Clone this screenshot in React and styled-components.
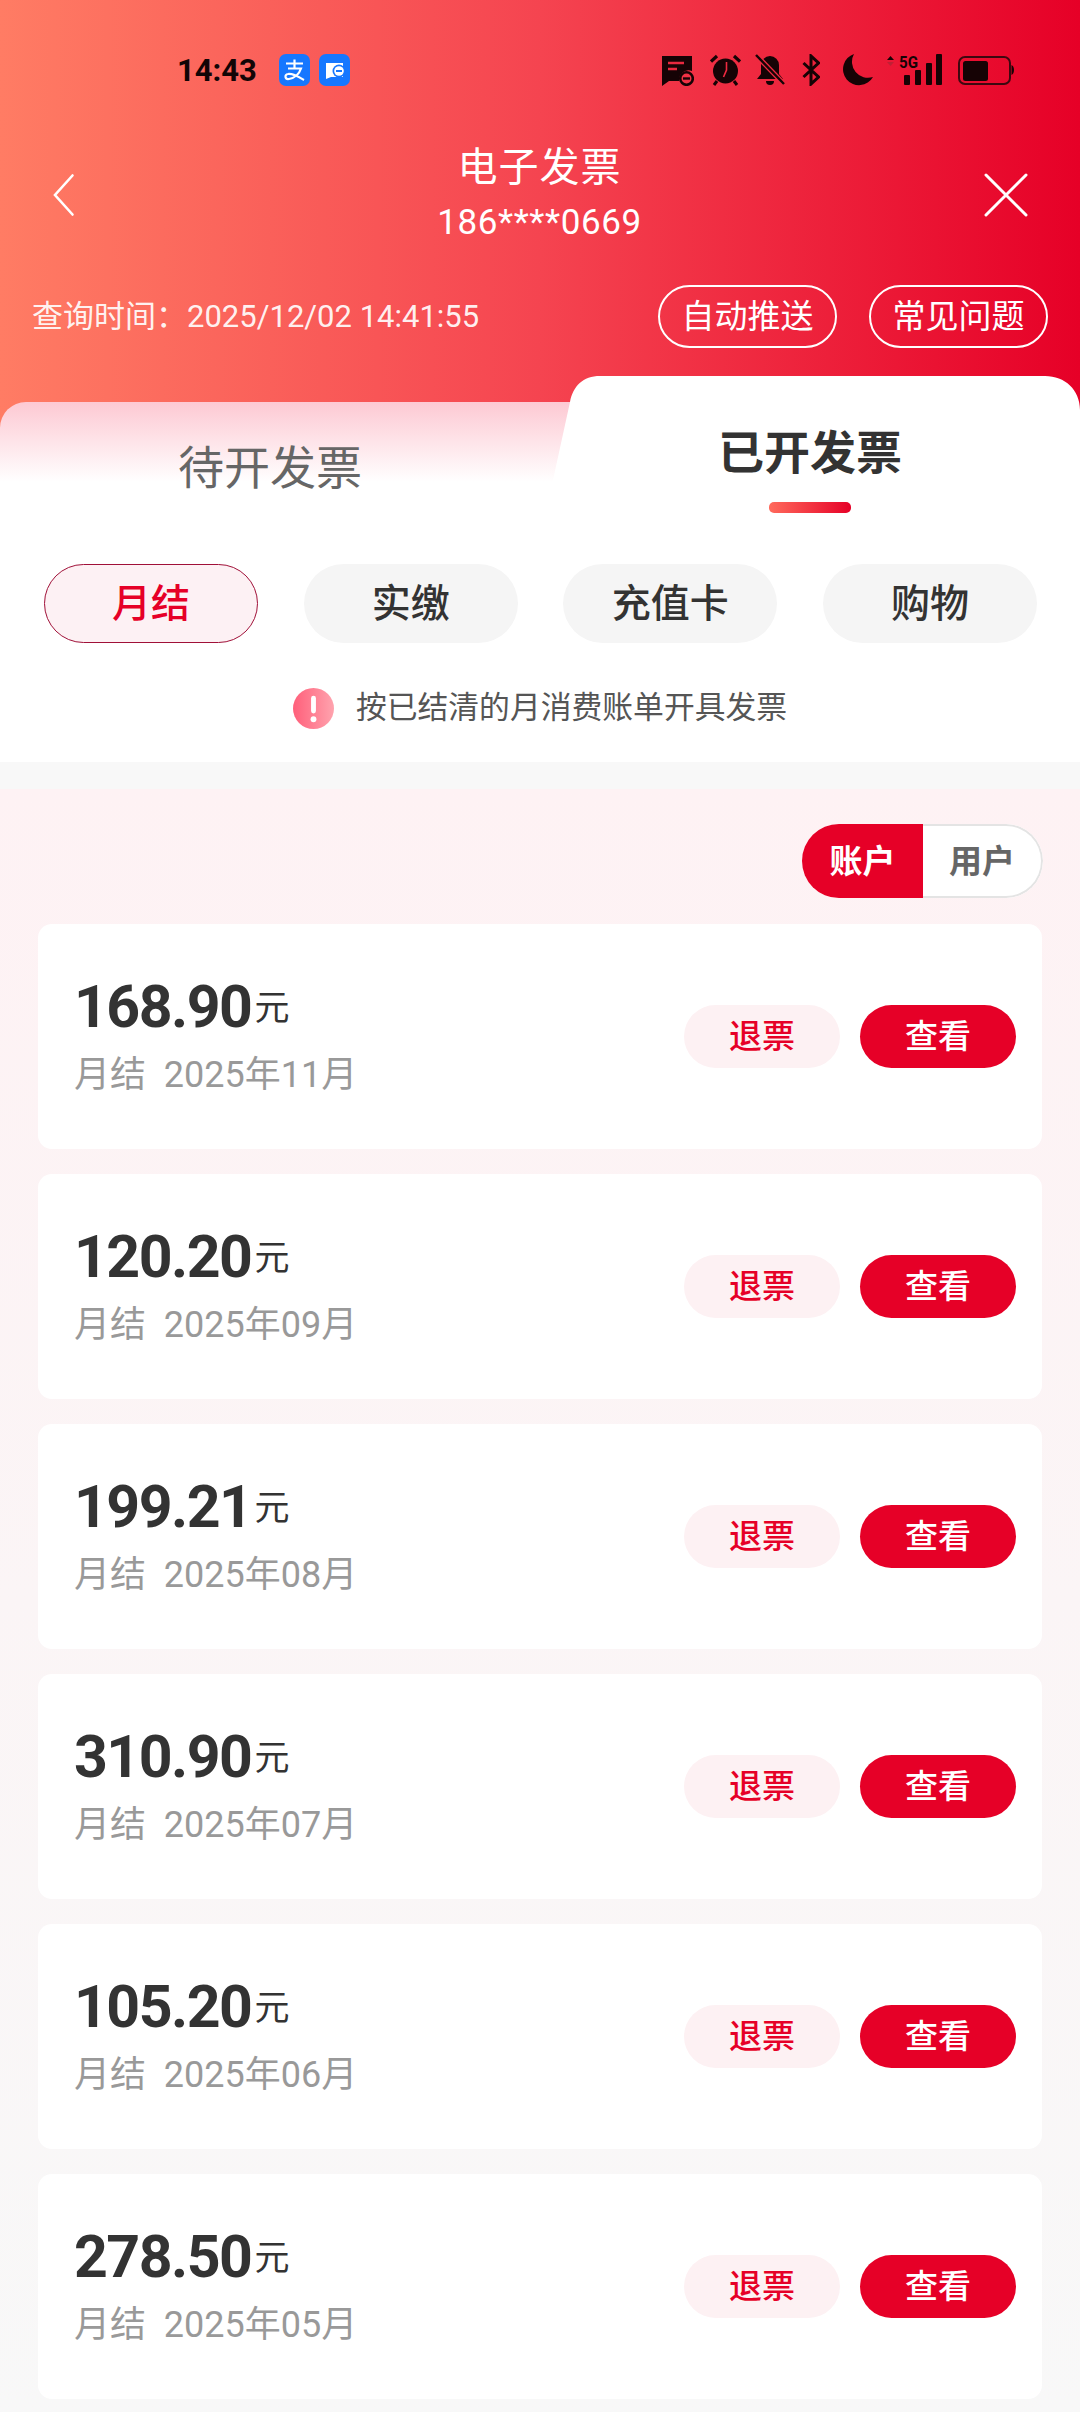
import React from "react";
import styled, { createGlobalStyle } from "styled-components";

const Global = createGlobalStyle`
  html, body { margin: 0; padding: 0; background: #fff; }
  body { font-family: "Roboto", "Noto Sans CJK SC", sans-serif; }
`;
const CJK = `"Roboto", "Noto Sans CJK SC", sans-serif`;

const Page = styled.div`
  width: 1080px; height: 2412px; overflow: hidden; background: #fff; display: flex; flex-direction: column;
`;
const Hero = styled.header`
  height: 436px; flex: none; background: linear-gradient(90deg, #ff7c64 0%, #f54450 50%, #e60027 100%);
  display: flex; flex-direction: column; position: relative;
`;
const StatusBar = styled.div`
  height: 50px; margin-top: 45px; padding: 0 0 0 177px; display: flex; align-items: center; box-sizing: border-box;
`;
const Clock = styled.span`
  font: 700 31px "Roboto", sans-serif; color: #120506; width: 93px;
`;
const AppIcon = styled.svg`
  width: 31px; height: 32px; margin-left: 9px; flex: none;
`;
const SysIcons = styled.div`
  margin-left: auto; margin-right: 66px; display: flex; align-items: center;
`;
const SysIcon = styled.svg`
  display: block; height: 32px; width: ${p => p.$w}px; margin-left: ${p => p.$gap}px; flex: none;
`;
const TitleBar = styled.div`
  display: flex; align-items: flex-start; justify-content: space-between; height: 105px; padding: 0 51px 0 50px; margin-top: 45px;
`;
const NavIcon = styled.svg`
  width: 46px; height: 46px; margin-top: 32px; flex: none;
`;
const TitleBlock = styled.div`
  display: flex; flex-direction: column; align-items: center; color: #fff; padding-top: 7px;
`;
const Title = styled.div`
  font: 400 40px/42px ${CJK};
  letter-spacing: 1px;
`;
const Phone = styled.div`
  font: 400 35px/42px ${CJK}; margin-top: 13px; letter-spacing: 0.6px;
`;
const QueryRow = styled.div`
  display: flex; align-items: center; padding: 0 32px; margin-top: 40px;
`;
const QueryText = styled.span`
  font: 400 31px/40px ${CJK}; color: rgba(255,255,255,.92); margin-right: auto;
`;
const OutlineBtn = styled.span`
  width: 179px; height: 63px; box-sizing: border-box; border: 2px solid #fff; border-radius: 32px; color: #fff;
  display: flex; align-items: center; justify-content: center; margin-left: 32px; padding-bottom: 5px;
  font: 400 33px ${CJK};
`;
const Tabs = styled.div`
  position: relative; height: 126px; margin-top: -60px; flex: none; display: flex; background: transparent;
`;
const TabBack = styled.div`
  position: absolute; left: 0; top: 26px; width: 620px; height: 100px; border-radius: 26px 0 0 0;
  background: linear-gradient(180deg, #fdc9d3 0%, #fff 80%);
  padding-top: 38px; box-sizing: border-box;
`;
const TabBackLabel = styled.span`
  display: block; width: 540px; text-align: center; font: 400 46px/56px ${CJK}; color: #666;
`;
const TabFront = styled.svg`
  position: absolute; left: 550px; top: 0; width: 530px; height: 126px;
`;
const TabFrontLabel = styled.span`
  position: absolute; left: 620px; width: 380px; top: 47px; text-align: center; font: 700 46px/60px ${CJK}; color: #333;
`;
const Underline = styled.span`
  position: absolute; left: 769px; top: 126px; width: 82px; height: 11px; border-radius: 5px;
  background: linear-gradient(90deg, #ff6a5c, #e60027);
`;
const Pills = styled.div`
  display: grid; grid-template-columns: repeat(4, 214px); justify-content: space-between; padding: 0 43px 0 44px; margin-top: 62px; flex: none;
`;
const Pill = styled.span`
  height: 79px; box-sizing: border-box; border-radius: 40px; display: flex; align-items: center; justify-content: center;
  font: 500 39px ${CJK}; padding-bottom: 8px;
  background: ${p => p.$on ? "#fdf1f4" : "#f5f5f5"};
  color: ${p => p.$on ? "#e60027" : "#333"};
  border: ${p => p.$on ? "1.5px solid #a01038" : "none"};
`;
const Notice = styled.div`
  display: flex; align-items: center; justify-content: center; gap: 22px; margin-top: 43px; height: 44px; flex: none;
  font: 400 30.8px ${CJK}; color: #555;
`;
const NoticeText = styled.span`
  padding-bottom: 7px;
`;
const Gap = styled.div`
  height: 27px; background: #f8f8f8; margin-top: 32px; flex: none;
`;
const ListArea = styled.div`
  flex: 1; background: linear-gradient(180deg, #fef2f4 0%, #f8f8f8 100%); padding: 0 38px; display: flex; flex-direction: column;
`;
const Toggle = styled.div`
  align-self: flex-end; display: flex; width: 241px; height: 74px; margin: 35px -1px 26px 0;
  border-radius: 37px; overflow: hidden; background: #fff;
`;
const ToggleItem = styled.span`
  display: flex; align-items: center; justify-content: center; font: 700 33px ${CJK}; flex: none; box-sizing: border-box;
  width: ${p => p.$on ? 121 : 120}px; padding-bottom: 5px;
  color: ${p => p.$on ? "#fff" : "#666"}; background: ${p => p.$on ? "#e60027" : "#fff"};
  border: ${p => p.$on ? "none" : "2px solid #e4e4e4"};
  border-left: none;
  border-radius: ${p => p.$on ? "0" : "0 37px 37px 0"};
`;
const Cards = styled.div`
  display: flex; flex-direction: column; gap: 25px;
`;
const Card = styled.article`
  height: 225px; background: #fff; border-radius: 14px; display: flex; align-items: center; padding: 0 26px 0 36px;
`;
const CardInfo = styled.div`
  margin-right: auto; display: flex; flex-direction: column; margin-bottom: 3px;
`;
const AmountLine = styled.div`
  display: flex; align-items: flex-end; color: #333; height: 68px;
`;
const Amount = styled.span`
  font: 700 59px/68px "Roboto", sans-serif; letter-spacing: -1.5px;
`;
const Unit = styled.span`
  font: 400 35px/36px ${CJK}; margin: 0 0 14px 3px;
`;
const Meta = styled.div`
  font: 400 36px/46px ${CJK}; color: #999; margin-top: 11px; white-space: pre;
`;
const CardBtn = styled.span`
  width: 156px; height: 63px; border-radius: 32px; display: flex; align-items: center; justify-content: center;
  font: 500 33px ${CJK}; margin-left: 20px; padding-bottom: 5px; box-sizing: border-box;
  background: ${p => p.$primary ? "#e60027" : "#fdf1f3"};
  color: ${p => p.$primary ? "#fff" : "#e60027"};
`;

const rows = [
  ["168.90", "2025年11月"], ["120.20", "2025年09月"], ["199.21", "2025年08月"],
  ["310.90", "2025年07月"], ["105.20", "2025年06月"], ["278.50", "2025年05月"],
];

export default function App() {
  return (
    <Page>
      <Global />
      <Hero>
        <StatusBar>
          <Clock>14:43</Clock>
          <AppIcon viewBox="0 0 31 32">
            <rect width="31" height="32" rx="7" fill="#1677ff" />
            <path d="M7 9.500h17M15.500 5.500v8M9 14.500h13c-2 6-7 9.500-12 10.500-4 .7-5-4.500-1-5 5-.8 10 2.500 16 6" fill="none" stroke="#fff" strokeWidth="2.200" />
          </AppIcon>
          <AppIcon viewBox="0 0 31 32">
            <rect width="31" height="32" rx="7" fill="#1677ff" />
            <path d="M7 9h17v14H12l-5 2z" fill="#fff" />
            <circle cx="20" cy="17" r="6.500" fill="#1677ff" />
            <circle cx="20" cy="17" r="4.800" fill="#fff" />
            <rect x="17" y="16" width="6" height="2" fill="#1677ff" />
          </AppIcon>
          <SysIcons>
            <SysIcon $w={32} $gap={0} viewBox="0 0 32 32">
              <path d="M0 2h30v15a9.500 9.500 0 0 0-13 9.500V27H7l-7 5z" fill="#160305" />
              <path d="M6 9h16M6 15h9" stroke="#e8293f" strokeWidth="2.400" />
              <circle cx="24.500" cy="24.500" r="6.300" fill="none" stroke="#160305" strokeWidth="2.600" />
              <path d="M21 24.500h7" stroke="#160305" strokeWidth="2.400" />
            </SysIcon>
            <SysIcon $w={31} $gap={16} viewBox="0 0 31 32">
              <circle cx="15.500" cy="17" r="12.500" fill="#160305" />
              <path d="M1 7.500L7 2M30 7.500L24 2" stroke="#160305" strokeWidth="3.200" />
              <path d="M7 27l-3 4M24 27l3 4" stroke="#160305" strokeWidth="3" />
              <path d="M16.500 8v8l-3 7" stroke="#ef2a40" strokeWidth="1.600" fill="none" />
            </SysIcon>
            <SysIcon $w={30} $gap={14} viewBox="0 0 30 32">
              <path d="M15 2a9 9 0 0 0-9 9v9l-4 5h26l-4-5v-9a9 9 0 0 0-9-9z" fill="#160305" />
              <path d="M11 27h8a4 4 0 0 1-8 0z" fill="#160305" />
              <path d="M1 1l28 29" stroke="#ef2a40" strokeWidth="5" />
              <path d="M1 1l28 29" stroke="#160305" strokeWidth="2.400" />
            </SysIcon>
            <SysIcon $w={18} $gap={17} viewBox="0 0 18 32">
              <path d="M1.500 9l15 14-7.500 7V2l7.500 7L1.500 23" fill="none" stroke="#160305" strokeWidth="3" />
            </SysIcon>
            <SysIcon $w={32} $gap={21} viewBox="0 0 32 32">
              <path d="M13 0a16 16 0 1 0 19 23A16 16 0 0 1 13 0z" fill="#160305" />
            </SysIcon>
            <SysIcon $w={56} $gap={14} viewBox="0 0 56 32">
              <path d="M0 6l3.500-4L7 6z" fill="#160305" />
              <path d="M0 8l3.500 4L7 8z" fill="#c02035" />
              <rect x="17" y="21" width="6" height="10" rx="1" fill="#160305" />
              <rect x="28" y="16" width="6" height="15" rx="1" fill="#160305" />
              <rect x="39" y="9" width="6" height="22" rx="1" fill="#160305" />
              <rect x="49" y="0" width="6" height="31" rx="1" fill="#160305" />
              <text x="12" y="14" fontFamily="Roboto" fontWeight="700" fontSize="16" textLength="19" lengthAdjust="spacingAndGlyphs" fill="#160305">5G</text>
            </SysIcon>
            <SysIcon $w={56} $gap={15} viewBox="0 0 56 32">
              <rect x="1" y="3" width="51" height="27" rx="6" fill="none" stroke="#3d0810" strokeWidth="2" />
              <rect x="5" y="7" width="25" height="20" rx="2.500" fill="#160305" />
              <path d="M53.500 11c1.500.5 2.500 2.500 2.500 5s-1 4.500-2.500 5z" fill="#160305" />
            </SysIcon>
          </SysIcons>
        </StatusBar>
        <TitleBar>
          <NavIcon viewBox="0 0 46 46">
            <path d="M22.500 3.500L5 23l17.500 19.500" fill="none" stroke="#fff" strokeWidth="2.600" strokeLinecap="round" />
          </NavIcon>
          <TitleBlock>
            <Title>电子发票</Title>
            <Phone>186****0669</Phone>
          </TitleBlock>
          <NavIcon viewBox="0 0 46 46">
            <path d="M3 3l40 40M43 3L3 43" fill="none" stroke="#fff" strokeWidth="3" strokeLinecap="round" />
          </NavIcon>
        </TitleBar>
        <QueryRow>
          <QueryText>查询时间：2025/12/02 14:41:55</QueryText>
          <OutlineBtn>自动推送</OutlineBtn>
          <OutlineBtn>常见问题</OutlineBtn>
        </QueryRow>
      </Hero>
      <Tabs>
        <TabBack><TabBackLabel>待开发票</TabBackLabel></TabBack>
        <TabFront viewBox="0 0 530 126" preserveAspectRatio="none">
          <path d="M0 126L3 104L20 26C23 10 33 0 50 0H495C515 0 530 14 530 34V126Z" fill="#fff" />
        </TabFront>
        <TabFrontLabel>已开发票</TabFrontLabel>
        <Underline />
      </Tabs>
      <Pills>
        <Pill $on>月结</Pill><Pill>实缴</Pill><Pill>充值卡</Pill><Pill>购物</Pill>
      </Pills>
      <Notice>
        <svg width="41" height="41" viewBox="0 0 42 42">
          <defs><linearGradient id="warn" x1="0" x2="1" y1="0" y2="0"><stop offset="0" stopColor="#ff5f7a" /><stop offset="1" stopColor="#ffa3ae" /></linearGradient></defs>
          <circle cx="21" cy="21" r="21" fill="url(#warn)" />
          <rect x="18.500" y="8" width="5" height="18" rx="2.500" fill="#fff" />
          <circle cx="21" cy="32" r="3" fill="#fff" />
        </svg>
        <NoticeText>按已结清的月消费账单开具发票</NoticeText>
      </Notice>
      <Gap />
      <ListArea>
        <Toggle><ToggleItem $on>账户</ToggleItem><ToggleItem>用户</ToggleItem></Toggle>
        <Cards>
          {rows.map(([a, d]) => (
            <Card key={d}>
              <CardInfo>
                <AmountLine><Amount>{a}</Amount><Unit>元</Unit></AmountLine>
                <Meta>{`月结  ${d}`}</Meta>
              </CardInfo>
              <CardBtn>退票</CardBtn>
              <CardBtn $primary>查看</CardBtn>
            </Card>
          ))}
        </Cards>
      </ListArea>
    </Page>
  );
}
